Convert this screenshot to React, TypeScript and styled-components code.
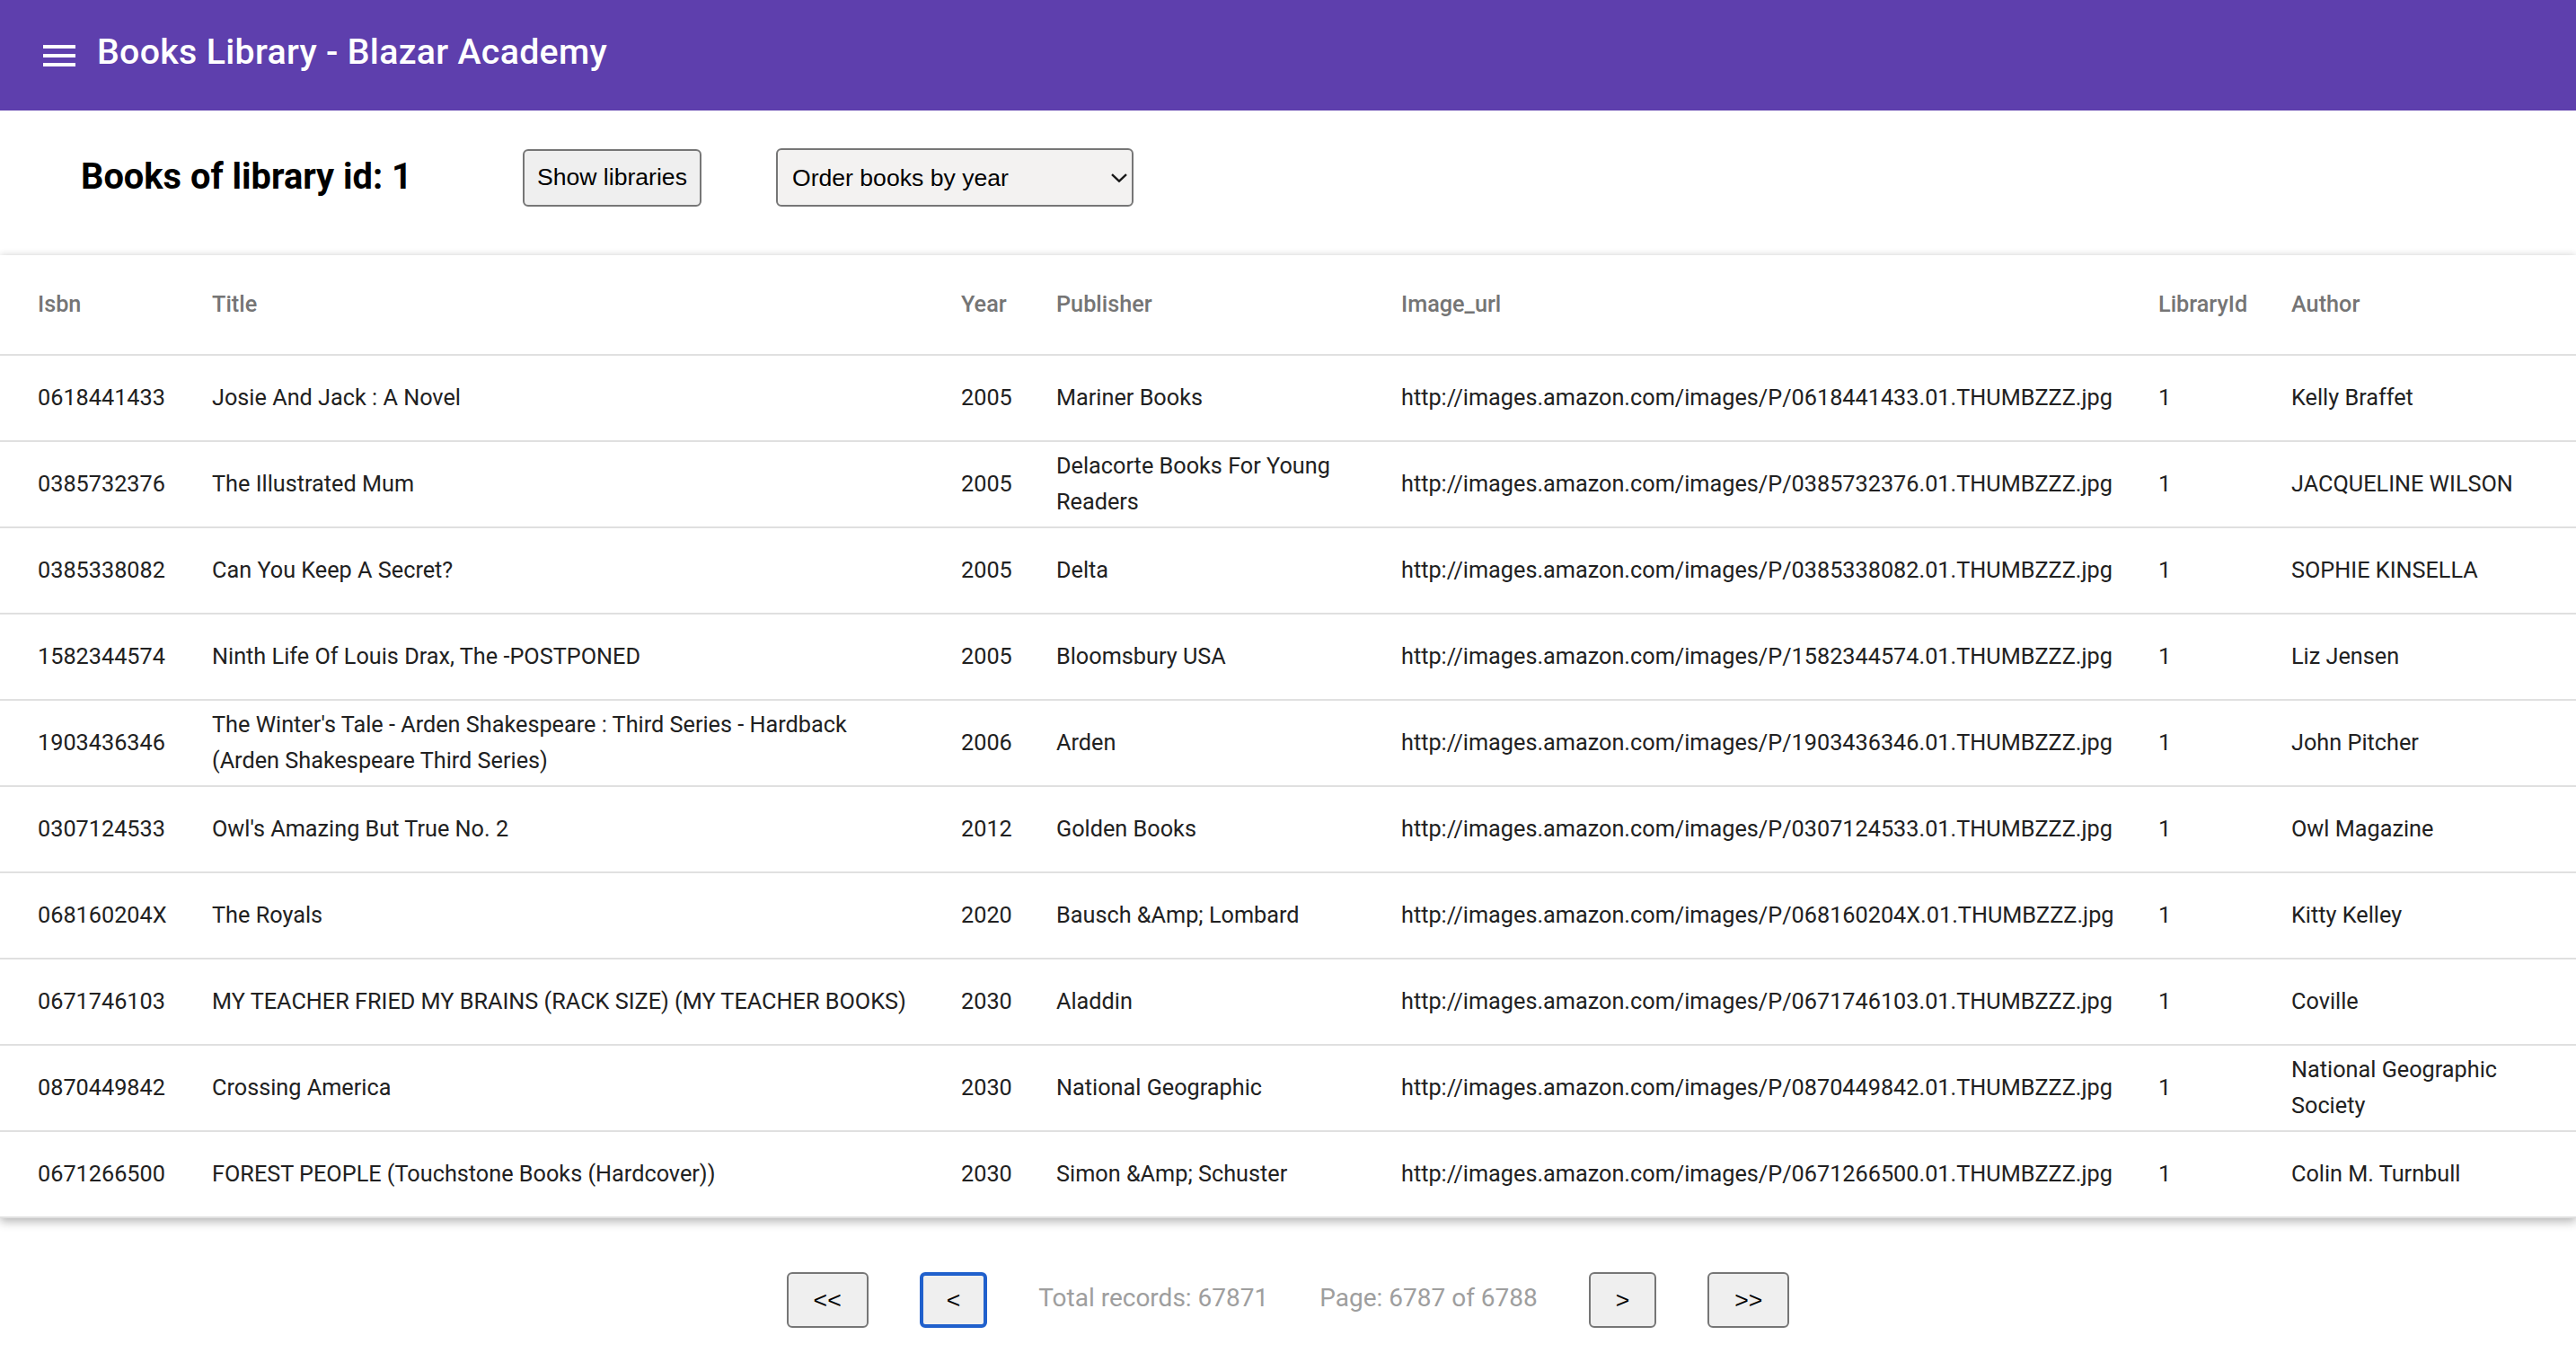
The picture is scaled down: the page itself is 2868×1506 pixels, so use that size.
import React from "react";
import styled, { createGlobalStyle } from "styled-components";

const GlobalStyle = createGlobalStyle`
  body {
    margin: 0;
    background: #ffffff;
    font-family: Roboto, "Noto Sans", sans-serif;
  }
`;

const AppBar = styled.header`
  height: 123px;
  display: flex;
  align-items: center;
  padding-left: 42px;
  background-color: #5e3fad;
  color: #ffffff;
`;

const MenuButton = styled.div`
  width: 48px;
  height: 48px;
  margin-right: 18px;
  display: flex;
`;

const AppTitle = styled.h1`
  margin: 0 0 7px 0;
  font-size: 39.3px;
  font-weight: 500;
  letter-spacing: 0.3px;
`;

const Toolbar = styled.div`
  display: flex;
  align-items: center;
  padding: 42px 0 54px 90px;
`;

const Heading = styled.h2`
  margin: 0 123px 2px 0;
  font-size: 39.8px;
  font-weight: 700;
  color: #000000;
`;

const NativeButton = styled.button<{ focused?: boolean; height?: number; pad?: number }>`
  height: ${p => p.height ?? 62}px;
  padding: 0 ${p => p.pad ?? 28}px;
  font-family: "Liberation Sans", Arial, sans-serif;
  font-size: 26.6px;
  color: #000000;
  background-color: #efefef;
  border: ${p => (p.focused ? "4px solid #2060cc" : "2px solid #767676")};
  border-radius: 6px;
  box-sizing: border-box;
`;

const SelectWrap = styled.div`
  position: relative;
  margin-left: 83px;
`;

const Select = styled.select`
  appearance: none;
  width: 398px;
  height: 65px;
  padding: 0 50px 0 16px;
  font-family: "Liberation Sans", Arial, sans-serif;
  font-size: 26.6px;
  color: #000000;
  background-color: #f3f2f1;
  border: 2px solid #767676;
  border-radius: 6px;
  box-sizing: border-box;
`;

const Chevron = styled.svg`
  position: absolute;
  right: 7px;
  top: 28px;
  width: 18px;
  height: 10px;
  pointer-events: none;
`;

const Paper = styled.div`
  background: #ffffff;
  box-shadow: 0 4px 10px rgba(0, 0, 0, 0.28), 0 -2px 8px rgba(0, 0, 0, 0.05);
`;

const Table = styled.table`
  width: 100%;
  table-layout: fixed;
  border-collapse: separate;
  border-spacing: 0;
  font-size: 25.25px;
  line-height: 40px;
`;

const HeadCell = styled.th`
  height: 110px;
  padding: 0 26px;
  text-align: left;
  font-weight: 500;
  color: #757575;
  border-bottom: 2px solid #e0e0e0;
  &:first-child {
    padding-left: 42px;
  }
`;

const Cell = styled.td<{ padRight?: number }>`
  height: 94px;
  padding: 0 ${p => p.padRight ?? 26}px 0 26px;
  color: #212121;
  vertical-align: middle;
  border-bottom: 2px solid #e0e0e0;
  &:first-child {
    padding-left: 42px;
  }
`;

const Pager = styled.div`
  display: flex;
  justify-content: center;
  align-items: center;
  gap: 57px;
  margin-top: 60px;
`;

const PagerText = styled.span`
  margin-bottom: 6px;
  font-size: 28px;
  color: #9e9e9e;
`;

const columns = [
  { name: "Isbn", width: 210 },
  { name: "Title", width: 834 },
  { name: "Year", width: 106 },
  { name: "Publisher", width: 384 },
  { name: "Image_url", width: 843 },
  { name: "LibraryId", width: 148 },
  { name: "Author", width: 343 },
];

const url = (isbn: string) => `http://images.amazon.com/images/P/${isbn}.01.THUMBZZZ.jpg`;

const books = [
  ["0618441433", "Josie And Jack : A Novel", "2005", "Mariner Books", "Kelly Braffet"],
  ["0385732376", "The Illustrated Mum", "2005", "Delacorte Books For Young Readers", "JACQUELINE WILSON"],
  ["0385338082", "Can You Keep A Secret?", "2005", "Delta", "SOPHIE KINSELLA"],
  ["1582344574", "Ninth Life Of Louis Drax, The -POSTPONED", "2005", "Bloomsbury USA", "Liz Jensen"],
  [
    "1903436346",
    "The Winter's Tale - Arden Shakespeare : Third Series - Hardback (Arden Shakespeare Third Series)",
    "2006",
    "Arden",
    "John Pitcher",
  ],
  ["0307124533", "Owl's Amazing But True No. 2", "2012", "Golden Books", "Owl Magazine"],
  ["068160204X", "The Royals", "2020", "Bausch &Amp; Lombard", "Kitty Kelley"],
  ["0671746103", "MY TEACHER FRIED MY BRAINS (RACK SIZE) (MY TEACHER BOOKS)", "2030", "Aladdin", "Coville"],
  ["0870449842", "Crossing America", "2030", "National Geographic", "National Geographic Society"],
  ["0671266500", "FOREST PEOPLE (Touchstone Books (Hardcover))", "2030", "Simon &Amp; Schuster", "Colin M. Turnbull"],
];

const MenuIcon = () => (
  <svg width="48" height="48" viewBox="0 0 24 24" fill="#ffffff">
    <path d="M3 18h18v-2H3v2zm0-5h18v-2H3v2zm0-7v2h18V6H3z" />
  </svg>
);

export default function App() {
  return (
    <>
      <GlobalStyle />
      <AppBar>
        <MenuButton>
          <MenuIcon />
        </MenuButton>
        <AppTitle>Books Library - Blazar Academy</AppTitle>
      </AppBar>

      <Toolbar>
        <Heading>Books of library id: 1</Heading>
        <NativeButton height={64} pad={14}>
          Show libraries
        </NativeButton>
        <SelectWrap>
          <Select defaultValue="year">
            <option value="year">Order books by year</option>
            <option value="title">Order books by title</option>
          </Select>
          <Chevron viewBox="0 0 18 10">
            <path d="M1 1.2l8 7.5 8-7.5" fill="none" stroke="#1a1a1a" strokeWidth="2.4" />
          </Chevron>
        </SelectWrap>
      </Toolbar>

      <Paper>
        <Table>
          <colgroup>
            {columns.map(c => (
              <col key={c.name} style={{ width: c.width }} />
            ))}
          </colgroup>
          <thead>
            <tr>
              {columns.map(c => (
                <HeadCell key={c.name}>{c.name}</HeadCell>
              ))}
            </tr>
          </thead>
          <tbody>
            {books.map(([isbn, title, year, publisher, author]) => (
              <tr key={isbn}>
                <Cell>{isbn}</Cell>
                <Cell padRight={30}>{title}</Cell>
                <Cell>{year}</Cell>
                <Cell>{publisher}</Cell>
                <Cell>{url(isbn)}</Cell>
                <Cell>1</Cell>
                <Cell>{author}</Cell>
              </tr>
            ))}
          </tbody>
        </Table>
      </Paper>

      <Pager>
        <NativeButton>&lt;&lt;</NativeButton>
        <NativeButton focused pad={26}>
          &lt;
        </NativeButton>
        <PagerText>Total records: 67871</PagerText>
        <PagerText>Page: 6787 of 6788</PagerText>
        <NativeButton>&gt;</NativeButton>
        <NativeButton>&gt;&gt;</NativeButton>
      </Pager>
    </>
  );
}
